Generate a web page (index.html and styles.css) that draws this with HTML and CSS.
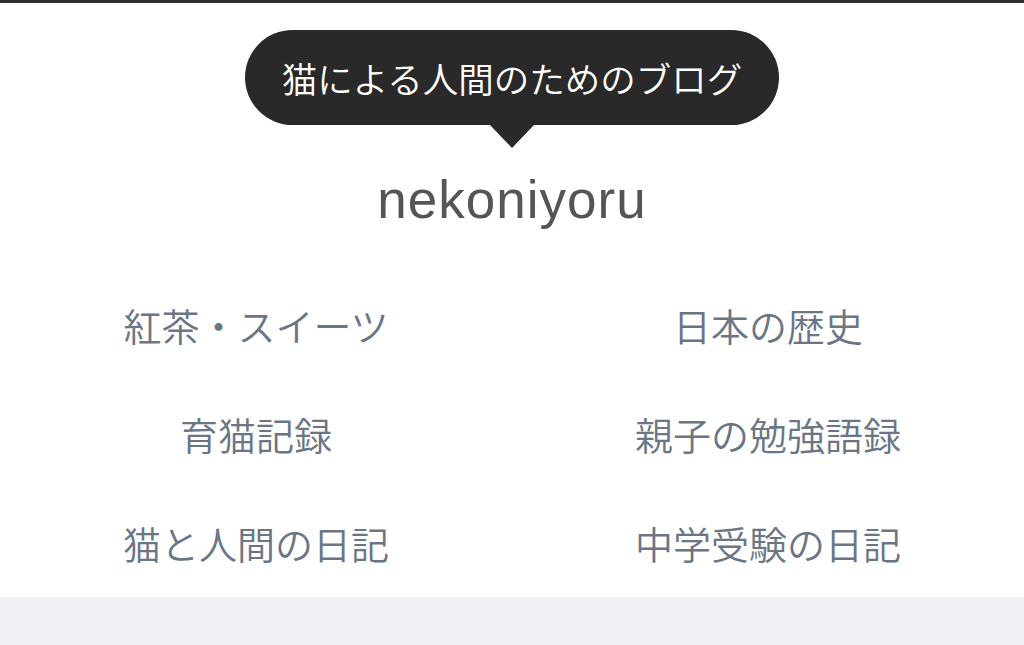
FILE: index.html
```html
<!DOCTYPE html>
<html lang="ja">
<head>
    <meta charset="UTF-8">
    <meta name="viewport" content="width=device-width, initial-scale=1.0">
    <title>nekoniyoru</title>
    <link rel="stylesheet" href="styles.css">
</head>
<body>
    <header class="site-header">
        <div class="tagline">
            <p class="tagline-text">猫による人間のためのブログ</p>
        </div>
        <h1 class="site-title">nekoniyoru</h1>

        <nav class="category-nav">
            <a href="#" class="category-link">紅茶・スイーツ</a>
            <a href="#" class="category-link">日本の歴史</a>
            <a href="#" class="category-link">育猫記録</a>
            <a href="#" class="category-link">親子の勉強語録</a>
            <a href="#" class="category-link">猫と人間の日記</a>
            <a href="#" class="category-link">中学受験の日記</a>
        </nav>
    </header>
</body>
</html>
```

FILE: styles.css
```css
body {
    margin: 0;
    background-color: #eff0f4;
    font-family: "Noto Sans CJK JP", "Noto Sans", sans-serif;
}
.site-header {
    background-color: #fff;
    border-top: 3px solid #2f2f2f;
    padding-top: 27px;
    box-shadow: 0 3px 8px rgba(0, 0, 0, 0.25);
    display: flex;
    flex-direction: column;
    align-items: center;
}
.tagline {
    position: relative;
    background-color: #292929;
    border-radius: 48px;
    padding: 0 37px;
    height: 95px;
    display: flex;
    align-items: center;
}
.tagline::after {
    content: "";
    position: absolute;
    left: 50%;
    bottom: -23px;
    margin-left: -22px;
    border-left: 22px solid transparent;
    border-right: 22px solid transparent;
    border-top: 23px solid #292929;
}
.tagline-text {
    margin: 0;
    color: #fff;
    font-size: 35.5px;
    font-weight: 350;
    line-height: 1;
}
.site-title {
    margin: 42px 0 0;
    font-family: "Liberation Sans", Arial, sans-serif;
    font-weight: normal;
    font-size: 53px;
    line-height: 65px;
    color: #555;
    letter-spacing: 1px;
}
.category-nav {
    align-self: stretch;
    margin-top: 38px;
    display: grid;
    grid-template-columns: 1fr 1fr;
}
.category-link {
    height: 109px;
    display: flex;
    align-items: center;
    justify-content: center;
    font-size: 38px;
    font-weight: 350;
    color: #6a7585;
    text-decoration: none;
}
```
